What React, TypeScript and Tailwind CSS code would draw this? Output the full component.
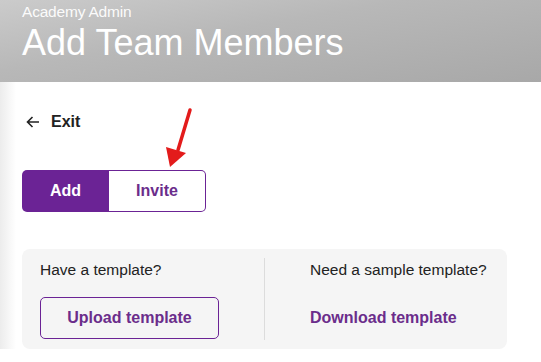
import React from "react";

export default function App() {
  return (
    <div className="relative w-[541px] h-[362px] overflow-hidden bg-white" style={{ fontFamily: '"Liberation Sans", Arial, sans-serif' }}>
      <div className="h-[82px] bg-[linear-gradient(170deg,#cbcbcb_0%,#b8b8b8_40%,#a8a8a8_100%)] pl-[22px] pt-[3px] text-white">
        <div className="text-[15.5px] leading-[18px] tracking-[-0.2px] text-white/95">Academy Admin</div>
        <div className="text-[36px] leading-[40px] mt-[2px]">Add Team Members</div>
      </div>
      <div className="flex">
        <div className="w-[16px] bg-[linear-gradient(90deg,#ececec,#ffffff)]" />
        <div className="flex-1 pl-[6px] pt-[29px]">
          <div className="flex items-center h-[22px] text-[#222]">
            <svg width="14" height="12" viewBox="0 0 14 12" className="ml-[4px]" fill="none" stroke="#222" strokeWidth="1.6">
              <path d="M13 6H1.5M6.5 1L1.5 6l5 5" />
            </svg>
            <span className="ml-[11px] font-bold text-[16px]">Exit</span>
          </div>
          <div className="mt-[37px] flex w-[184px] h-[42px]">
            <div className="w-[87px] flex items-center justify-center bg-[#6b2395] text-white font-bold text-[16px] rounded-l-[5px]">Add</div>
            <div className="flex-1 flex items-center justify-center border border-[#6b2395] border-l-0 rounded-r-[5px] text-[#6b2d8b] font-bold text-[16px]">Invite</div>
          </div>
          <div className="mt-[37px] w-[485px] h-[100px] bg-[#f5f5f5] rounded-[8px] flex pt-[9px] pb-[9px]">
            <div className="w-[242px] pl-[18px]">
              <div className="text-[15.5px] text-[#222] leading-[18px] mt-[3px]">Have a template?</div>
              <div className="mt-[18px] w-[179px] h-[42px] rounded-[5px] border border-[#6b2395] flex items-center justify-center text-[#6b2d8b] font-bold text-[16px]">Upload template</div>
            </div>
            <div className="w-px bg-[#dcdcdc]" />
            <div className="pl-[45px]">
              <div className="text-[15.5px] text-[#222] leading-[18px] mt-[3px]">Need a sample template?</div>
              <div className="mt-[18px] h-[42px] flex items-center text-[#6b2d8b] font-bold text-[16px]">Download template</div>
            </div>
          </div>
        </div>
      </div>
      <svg className="absolute left-0 top-0" width="541" height="362" viewBox="0 0 541 362">
        <line x1="190" y1="110" x2="178" y2="150" stroke="#e31b1b" strokeWidth="3.5" strokeLinecap="round" />
        <polygon points="170,167 166,147 186,153" fill="#e31b1b" />
      </svg>
    </div>
  );
}
